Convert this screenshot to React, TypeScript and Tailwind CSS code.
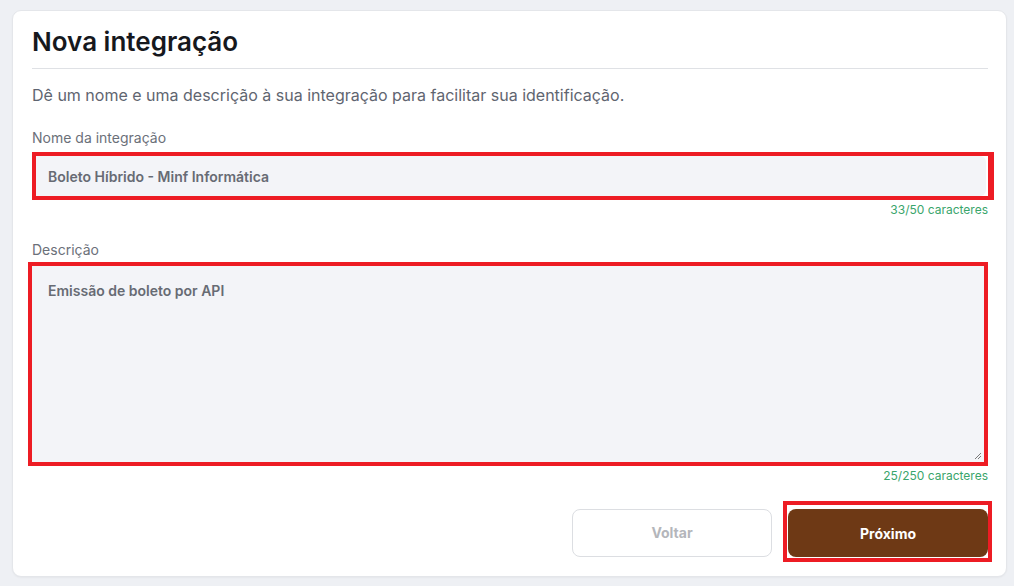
import React from "react";

export default function App() {
  return (
    <div
      className="w-[1014px] h-[586px] bg-[#eef0f4] pt-[10px] pl-[12px] pr-[7px] pb-[9px]"
      style={{ fontFamily: "Inter, 'Noto Sans', sans-serif" }}
    >
      <div className="h-full bg-white rounded-[9px] border border-[#e4e6ea] shadow-[0_1px_2px_rgba(0,0,0,0.04)] pl-[19px] pr-[18px] pt-[15px] flex flex-col">
        <h1 className="text-[26px] leading-[32px] font-semibold text-[#16181d] pb-[10px] border-b border-[#dfe1e5]">
          Nova integração
        </h1>
        <p className="mt-[14px] text-[16px] leading-[24px] text-[#5f6570]">
          Dê um nome e uma descrição à sua integração para facilitar sua identificação.
        </p>

        <label className="mt-[21px] text-[14px] leading-[20px] text-[#6b7079]">
          Nome da integração
        </label>
        <div className="mt-[4px] mr-[-6px] h-[48px] border-4 border-r-[6px] border-[#ed1c24] pr-[2px] bg-white">
          <div className="h-full bg-[#f3f4f8] rounded-r-[6px] flex items-center pl-[12px] text-[14px] font-semibold text-[#676b74]">
            Boleto Híbrido - Minf Informática
          </div>
        </div>
        <div className="mt-[2px] text-right text-[12px] leading-[16px] text-[#3aa56c]">
          33/50 caracteres
        </div>

        <label className="mt-[22px] text-[14px] leading-[20px] text-[#6b7079]">
          Descrição
        </label>
        <div className="ml-[-4px] mt-[2px] border-4 border-[#ed1c24] relative">
          <div className="h-[196px] bg-[#f3f4f8] pl-[16px] pt-[15px] text-[14px] leading-[20px] font-semibold text-[#676b74]">
            Emissão de boleto por API
          </div>
          <svg
            className="absolute right-[2px] bottom-[2px]"
            width="8"
            height="8"
            viewBox="0 0 8 8"
          >
            <path d="M1 7 L7 1 M4 7 L7 4" stroke="#7a7a7a" strokeWidth="1" />
          </svg>
        </div>
        <div className="mt-[2px] text-right text-[12px] leading-[16px] text-[#3aa56c]">
          25/250 caracteres
        </div>

        <div className="mt-[17px] flex justify-end items-center gap-[11px] mr-[-4px]">
          <button className="w-[200px] h-[48px] mt-[2px] rounded-[8px] border border-[#dcdee2] bg-white text-[14px] font-bold text-[#b4b6bb]">
            Voltar
          </button>
          <div className="border-4 border-[#ed1c24] pt-[4px] pb-[1px] pl-[1px] bg-white">
            <button className="w-[200px] h-[48px] rounded-[8px] bg-[#6e3915] text-[14px] font-bold text-white block">
              Próximo
            </button>
          </div>
        </div>
      </div>
    </div>
  );
}
